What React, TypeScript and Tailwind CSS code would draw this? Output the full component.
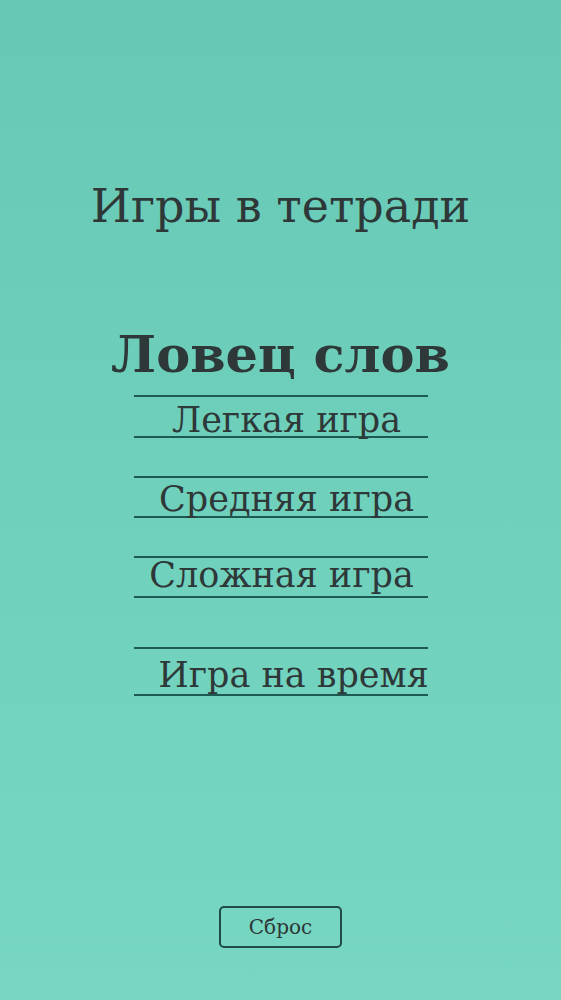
import React from 'react';

const modes = [
  { label: 'Легкая игра', pad: 'pl-[12px]', h: 'h-[43px]', gap: 'mt-0', shift: 'translate-y-[2px]' },
  { label: 'Средняя игра', pad: 'pl-[12px]', h: 'h-[42px]', gap: 'mt-[38px]', shift: 'translate-y-[1px]' },
  { label: 'Сложная игра', pad: 'pl-[2px]', h: 'h-[42px]', gap: 'mt-[38px]', shift: '-translate-y-[3px]' },
  { label: 'Игра на время', pad: 'pl-[26px]', h: 'h-[49px]', gap: 'mt-[49px]', shift: '-translate-y-[1px]' },
];

export default function App() {
  return (
    <div
      className="min-h-[1000px] w-full bg-gradient-to-b from-[#67c9b5] to-[#77d7c3] flex flex-col items-center text-[#2e3838]"
      style={{ fontFamily: '"DejaVu Serif", "Liberation Serif", serif' }}
    >
      {/* Header */}
      <h1 className="mt-[178px] text-[46px] leading-[56px] font-normal">Игры в тетради</h1>
      <h2 className="mt-[90px] text-[51px] leading-[60px] font-bold">Ловец слов</h2>

      {/* Menu rows drawn like notebook lines */}
      <div className="mt-[11px] flex flex-col w-[294px]">
        {modes.map((m) => (
          <div
            key={m.label}
            className={`${m.gap} ${m.h} ${m.pad} border-y-2 border-[#1d5a54] flex items-end justify-center`}
          >
            <span className={`${m.shift} text-[35px] leading-none whitespace-nowrap`}>{m.label}</span>
          </div>
        ))}
      </div>

      <div className="flex-1" />

      {/* Reset */}
      <button className="mb-[52px] w-[123px] h-[42px] rounded-[5px] border-2 border-[#1f4c49] text-[20px] text-[#2e3838]">
        Сброс
      </button>
    </div>
  );
}
